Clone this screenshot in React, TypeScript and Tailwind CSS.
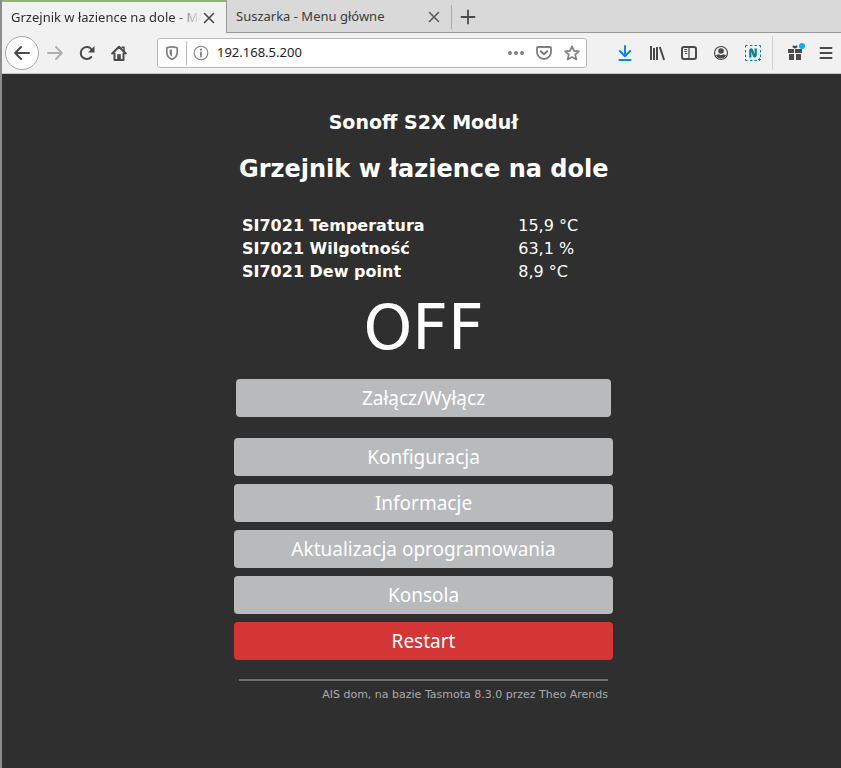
import type { ReactNode } from "react";

const uiFont = "font-['Noto_Sans',sans-serif]";

function Icon({ children }: { children: ReactNode }) {
  return (
    <svg
      viewBox="0 0 16 16"
      className="h-4 w-4 shrink-0"
      fill="none"
      stroke="currentColor"
      strokeWidth="2"
      strokeLinecap="round"
      strokeLinejoin="round"
      aria-hidden="true"
    >
      {children}
    </svg>
  );
}

function ToolButton({
  label,
  children,
  color = "text-[#4a4a4a]",
  width = "w-8",
}: {
  label: string;
  children: ReactNode;
  color?: string;
  width?: string;
}) {
  return (
    <button
      type="button"
      aria-label={label}
      className={`relative flex h-8 shrink-0 items-center justify-center ${width} ${color}`}
    >
      {children}
    </button>
  );
}

function CloseIcon() {
  return (
    <Icon>
      <path d="M3.5 3.5l9 9M12.5 3.5l-9 9" strokeWidth="1.6" />
    </Icon>
  );
}

function TabBar() {
  return (
    <div className="flex h-[33px] bg-[#d9d9d9] text-[13px] text-[#3c3c3c]">
      <div className="flex w-[224px] items-center border-t-2 border-[#8fb56e] bg-[#f1f1f1] pr-[9px] pl-[9px]">
        <button
          type="button"
          className="min-w-0 flex-1 overflow-hidden text-left whitespace-nowrap text-[#2e2e2e] [mask-image:linear-gradient(to_right,black_86%,transparent)]"
        >
          Grzejnik w łazience na dole - Me
        </button>
        <button type="button" aria-label="Zamknij kartę" className="text-[#4a4a4a]">
          <CloseIcon />
        </button>
      </div>
      <div className="flex flex-1 items-center border-b border-l border-[#989898] pt-px">
        <div className="flex h-6 w-[225px] items-center border-r border-[#aaaaaa] pr-[9px] pl-[9px]">
          <button type="button" className="flex-1 text-left whitespace-nowrap">
            Suszarka - Menu główne
          </button>
          <button type="button" aria-label="Zamknij kartę" className="text-[#5a5a5a]">
            <CloseIcon />
          </button>
        </div>
        <ToolButton label="Nowa karta">
          <Icon>
            <path d="M8 1.5v13M1.5 8h13" strokeWidth="1.8" />
          </Icon>
        </ToolButton>
      </div>
    </div>
  );
}

function AddressBar() {
  return (
    <div className="mr-[22px] ml-[22px] flex h-[30px] min-w-0 flex-1 items-center rounded-[3px] border border-[#b8b8b8] bg-white pr-1.5 pl-1.5 text-[#808080]">
      <Icon>
        <path d="M8 1.8c2 0 3.8.4 5.2 1v4.400c0 3.600-2 5.800-5.200 7.300-3.200-1.500-5.200-3.700-5.200-7.300V2.800c1.400-.6 3.200-1 5.200-1z" strokeWidth="1.7" />
        <path d="M8 4.500v7c-1.600-1-2.400-2.400-2.400-4.300V4.900c.7-.3 1.600-.4 2.400-.4z" fill="currentColor" stroke="none" />
      </Icon>
      <span className="mr-1.5 ml-1.5 h-6 w-px bg-[#bdbdbd]" />
      <Icon>
        <circle cx="8" cy="8" r="6.800" strokeWidth="1.100" />
        <path d="M8 7.500v4" strokeWidth="1.800" />
        <circle cx="8" cy="4.700" r="1.100" fill="currentColor" stroke="none" />
      </Icon>
      <input
        type="text"
        aria-label="Adres"
        defaultValue="192.168.5.200"
        className="ml-2 min-w-0 flex-1 bg-transparent text-[13px] text-[#222222] outline-none"
      />
      <div className="flex gap-3">
        <button type="button" aria-label="Działania">
          <Icon>
            <g fill="currentColor" stroke="none">
              <circle cx="2" cy="8" r="2" />
              <circle cx="8" cy="8" r="2" />
              <circle cx="14" cy="8" r="2" />
            </g>
          </Icon>
        </button>
        <button type="button" aria-label="Pocket">
          <Icon>
            <path d="M2 2h12a1 1 0 0 1 1 1v4a7 7 0 0 1-14 0V3a1 1 0 0 1 1-1z" strokeWidth="1.800" />
            <path d="M4.800 6.200L8 9.300l3.200-3.100" />
          </Icon>
        </button>
        <button type="button" aria-label="Dodaj zakładkę">
          <Icon>
            <path d="M8 1.300l2 4.500 4.900.5-3.700 3.300 1.100 4.900L8 12l-4.300 2.500 1.100-4.900L1.100 6.300 6 5.800z" strokeWidth="1.700" />
          </Icon>
        </button>
      </div>
    </div>
  );
}

function Toolbar() {
  return (
    <div className="flex h-[41px] items-center border-b border-[#c4c4c4] bg-[#f1f1f1] pl-[3px]">
      <button
        type="button"
        aria-label="Wstecz"
        className="flex h-[34px] w-[34px] shrink-0 items-center justify-center rounded-full border border-[#a8a8a8] bg-white text-[#4a4a4a]"
      >
        <Icon>
          <path d="M15 8H1.500M7 2L1.200 8 7 14" />
        </Icon>
      </button>
      <ToolButton label="Dalej" color="text-[#b0b0b0]">
        <Icon>
          <path d="M1 8h13.500M9 2l5.800 6L9 14" />
        </Icon>
      </ToolButton>
      <ToolButton label="Odśwież">
        <Icon>
          <path d="M12.300 12A6 6 0 1 1 12.600 4.500" />
          <path d="M15.500 1v6.500H9z" fill="currentColor" stroke="none" />
        </Icon>
      </ToolButton>
      <ToolButton label="Strona startowa">
        <Icon>
          <path d="M1.200 8.500L8 1.700l6.800 6.800M3.500 8.500V15h9V8.500" />
          <path d="M6.200 15V9.200h3.600V15z" fill="currentColor" stroke="none" />
          <path d="M11 2.300h2v3" strokeWidth="1.500" />
        </Icon>
      </ToolButton>
      <AddressBar />
      <ToolButton label="Pobrane" color="text-[#0a84ff]">
        <Icon>
          <path d="M8 1v10M2.800 6L8 11.200 13.200 6M2.500 15h11" />
        </Icon>
      </ToolButton>
      <ToolButton label="Biblioteka">
        <Icon>
          <path d="M2 1v14M5 3v12M8 2v13M10.800 2l4.300 13" strokeLinecap="butt" />
        </Icon>
      </ToolButton>
      <ToolButton label="Panel boczny">
        <Icon>
          <rect x="1" y="2" width="14" height="12" rx="2" />
          <path d="M8 2v12" strokeWidth="1.300" />
          <path d="M3.300 4.500h2.900M3.300 6.500h2.900M4 8.500h2.200" strokeWidth="1" strokeLinecap="butt" />
        </Icon>
      </ToolButton>
      <ToolButton label="Konto">
        <Icon>
          <circle cx="8" cy="8" r="6.500" strokeWidth="1.200" />
          <circle cx="8" cy="6" r="2.800" fill="currentColor" stroke="none" />
          <path d="M3 10.200c1-.5 2-.9 3-1 .6.600 1.200.9 2 .9s1.400-.3 2-.9c1 .1 2 .5 3 1a5.500 5.500 0 0 1-10 0z" fill="currentColor" stroke="none" />
        </Icon>
      </ToolButton>
      <ToolButton label="Zrzut strony" color="text-[#008594]">
        <Icon>
          <path
            d="M.5 2.500V.5h2M5 .5h2.500M9.500.5H12M14 .5h1.500v2M15.500 5v2.500M15.500 9.500V12M.5 5v2.500M.5 9.500V12M.5 14v1.500h2M5 15.500h2.500M9.500 15.500H12M14.500 13v3M13 14.500h3"
            strokeWidth="1"
            strokeLinecap="butt"
          />
          <path d="M5.300 12.500V5.200C5.800 3.800 6.700 4 7.200 5.500l1.500 4.700c.5 1.600 1.500 1.600 2 .2V3.500" strokeWidth="2.200" strokeLinecap="butt" />
        </Icon>
      </ToolButton>
      <span className="mr-1.5 ml-[3px] h-[34px] w-px shrink-0 bg-[#d0d0d0]" />
      <ToolButton label="Co nowego">
        <Icon>
          <path d="M1 4h6v4H1zM8 4h7v4H8zM2 9h5v6H2zM9 9h5v6H9zM8 3.500L5.400 2.200 6 .3 8 1 10 .3l.6 1.900z" fill="currentColor" stroke="none" />
        </Icon>
        <span className="absolute top-1.5 right-1.5 h-1.5 w-1.5 rounded-full bg-[#00b0ff]" />
      </ToolButton>
      <ToolButton label="Menu" width="w-[30px]">
        <Icon>
          <path d="M2.500 3h11M2.500 8h11M2.500 13h11" />
        </Icon>
      </ToolButton>
    </div>
  );
}

const readings = [
  { name: "SI7021 Temperatura", value: "15,9 °C" },
  { name: "SI7021 Wilgotność", value: "63,1 %" },
  { name: "SI7021 Dew point", value: "8,9 °C" },
];

const menu = [
  { label: "Konfiguracja", color: "bg-[#b8babc]" },
  { label: "Informacje", color: "bg-[#b8babc]" },
  { label: "Aktualizacja oprogramowania", color: "bg-[#b8babc]" },
  { label: "Konsola", color: "bg-[#b8babc]" },
  { label: "Restart", color: "bg-[#d43535]" },
];

const buttonBase = `block h-[38px] w-full rounded text-[19px] leading-[38px] text-white ${uiFont}`;

function DevicePage() {
  return (
    <main className="flex flex-1 justify-center bg-[#2f2f2f] pt-9 pb-14 pl-1 font-['DejaVu_Sans',sans-serif] text-white">
      <div className="w-[379px]">
        <div className="px-[5px] text-center whitespace-nowrap">
          <h3 className="text-[19px] leading-6 font-bold">Sonoff S2X Moduł</h3>
          <h2 className="mt-[21px] text-[24px] leading-7 font-bold">Grzejnik w łazience na dole</h2>
        </div>
        <table className="mt-[31px] w-full text-[16px] leading-[23px]">
          <tbody>
            {readings.map((r) => (
              <tr key={r.name}>
                <th scope="row" className="w-3/4 pl-2 text-left font-bold">
                  {r.name}
                </th>
                <td className="whitespace-nowrap">{r.value}</td>
              </tr>
            ))}
          </tbody>
        </table>
        <div className="mt-[9px] text-center text-[62px] leading-[72px]">OFF</div>
        <div className="mt-[15px] px-0.5">
          <button type="button" className={`${buttonBase} bg-[#b8babc]`}>
            Załącz/Wyłącz
          </button>
        </div>
        <div className="mt-[21px] flex flex-col gap-2">
          {menu.map((m) => (
            <button key={m.label} type="button" className={`${buttonBase} ${m.color}`}>
              {m.label}
            </button>
          ))}
        </div>
        <footer className="mx-[5px] mt-[19px] border-t-2 border-[#6f6f6f] pt-[5px] text-right text-[11px] leading-[18px]">
          <a href="#tasmota" className="text-[#aaaaaa]">
            AIS dom, na bazie Tasmota 8.3.0 przez Theo Arends
          </a>
        </footer>
      </div>
    </main>
  );
}

export default function App() {
  return (
    <div className={`flex min-h-screen flex-col border-l-2 border-[#8c8c8c] bg-[#2f2f2f] ${uiFont}`}>
      <TabBar />
      <Toolbar />
      <DevicePage />
    </div>
  );
}
